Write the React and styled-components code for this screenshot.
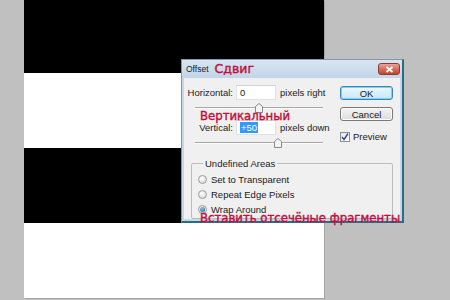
import React from "react";
import styled, { createGlobalStyle } from "styled-components";

const GlobalStyle = createGlobalStyle`
  html, body {
    margin: 0;
    padding: 0;
    background: #c0c0c0;
  }
  body {
    width: 450px;
    height: 300px;
    overflow: hidden;
    font-family: "Liberation Sans", Arial, sans-serif;
  }
`;

// photoshop workspace with the striped document
const Workspace = styled.div`
  position: relative;
  width: 450px;
  height: 300px;
  padding-left: 24px;
  box-sizing: border-box;
`;

const Canvas = styled.div`
  width: 300px;
  height: 298px;
  display: flex;
  flex-direction: column;
  box-shadow: 1px 1px 0 #a4a4a4;
`;

const Stripe = styled.div`
  height: ${(p) => p.$h}px;
  background: ${(p) => (p.$dark ? "#000" : "#fff")};
`;

// the Offset dialog window
const Dialog = styled.div`
  position: absolute;
  left: 181px;
  top: 59px;
  width: 223px;
  height: 164px;
  box-sizing: border-box;
  border: 1px solid #8199ae;
  border-right: 2px solid #2b6b83;
  border-bottom: 2px solid #2b6b83;
  background: #c5d7ea;
  display: flex;
  flex-direction: column;
`;

const TitleBar = styled.div`
  height: 18px;
  display: flex;
  align-items: center;
  padding: 0 2px 0 4px;
  background: linear-gradient(#d9e5f2, #c2d5e9);
`;

const TitleText = styled.span`
  font-size: 8.5px;
  color: #14202e;
`;

const Note = styled.span`
  font-family: "DejaVu Sans", Verdana, sans-serif;
  font-size: ${(p) => p.$size || 11.7}px;
  line-height: 14px;
  color: #c20f3c;
  -webkit-text-stroke: 0.4px #c20f3c;
  white-space: nowrap;
`;

const TitleNote = styled(Note)`
  margin-left: 6px;
`;

const CloseButton = styled.div`
  margin-left: auto;
  width: 22px;
  height: 12px;
  box-sizing: border-box;
  border: 1px solid #8b3b2f;
  border-radius: 3px;
  background: linear-gradient(#eaa597, #d8705c 50%, #c2442f);
  display: flex;
  align-items: center;
  justify-content: center;
`;

const Body = styled.div`
  flex: 1;
  margin: 0 2px 2px 2px;
  background: #f0f0f0;
  display: flex;
  flex-direction: column;
`;

const TopSection = styled.div`
  display: flex;
`;

const Fields = styled.div`
  position: relative;
  width: 150px;
  padding-top: 7px;
  display: flex;
  flex-direction: column;
`;

const FieldRow = styled.div`
  display: flex;
  align-items: center;
  height: 15px;
  font-size: 9.5px;
  color: #1a1a1a;
`;

const FieldLabel = styled.span`
  width: 49px;
  text-align: right;
  margin-right: 3px;
`;

const NumberBox = styled.div`
  width: 40px;
  height: 15px;
  box-sizing: border-box;
  background: #fff;
  border: 1px solid #e2e2e2;
  border-top-color: #d4d4d4;
  padding-left: 3px;
  display: flex;
  align-items: center;
`;

const Selected = styled.span`
  background: #3399ff;
  color: #fff;
  padding: 0 1px;
  line-height: 11px;
`;

const Units = styled.span`
  margin-left: 4px;
`;

const Slider = styled.div`
  position: relative;
  width: 128px;
  height: 10px;
  margin: 3px 0 7px 11px;

  &::before {
    content: "";
    position: absolute;
    left: 0;
    right: 0;
    top: 4px;
    height: 1px;
    background: #a7a7a7;
    box-shadow: 0 1px 0 #fdfdfd;
  }
`;

const Thumb = styled.svg`
  position: absolute;
  top: 0;
  left: ${(p) => p.$pos - 4}px;
`;

const FloatNote = styled(Note)`
  position: absolute;
  left: ${(p) => p.$x}px;
  top: ${(p) => p.$y}px;
`;

const Buttons = styled.div`
  margin-left: 6px;
  width: 53px;
  padding-top: 8px;
  display: flex;
  flex-direction: column;
`;

const Button = styled.div`
  height: 14px;
  box-sizing: border-box;
  border: 1px solid ${(p) => (p.$default ? "#3388c0" : "#7a7a7a")};
  border-radius: 3px;
  background: ${(p) =>
    p.$default
      ? "linear-gradient(#eef8fd, #c6e8fa)"
      : "linear-gradient(#f4f4f4, #dcdcdc)"};
  box-shadow: ${(p) => (p.$default ? "inset 0 0 0 1px #7fd0f2" : "inset 0 0 0 1px #fbfbfb")};
  font-size: 9.5px;
  color: #1a1a1a;
  display: flex;
  align-items: center;
  justify-content: center;
  margin-bottom: 7px;
`;

const CheckRow = styled.label`
  margin-top: 3px;
  display: flex;
  align-items: center;
  font-size: 9.5px;
  color: #1a1a1a;
`;

const CheckBox = styled.span`
  width: 10px;
  height: 10px;
  box-sizing: border-box;
  border: 1px solid #8e8f8f;
  background: linear-gradient(135deg, #e6e6e6, #ffffff);
  margin-right: 3px;
  display: flex;
  align-items: center;
  justify-content: center;
`;

const GroupBox = styled.div`
  position: relative;
  margin: 8px 7px 0 7px;
  height: 56px;
  box-sizing: border-box;
  border: 1px solid #bcbcbc;
  border-radius: 2px;
  padding-top: 8px;
  display: flex;
  flex-direction: column;
`;

const Legend = styled.span`
  position: absolute;
  top: -6px;
  left: 11px;
  padding: 0 2px;
  background: #f0f0f0;
  font-size: 9.5px;
  line-height: 11px;
  color: #1a1a1a;
`;

const RadioRow = styled.div`
  height: 15px;
  display: flex;
  align-items: center;
  padding-left: 6px;
  font-size: 9.5px;
  color: #1a1a1a;
`;

const Radio = styled.span`
  width: 9px;
  height: 9px;
  box-sizing: border-box;
  border-radius: 50%;
  border: 1px solid #9a9a9a;
  background: radial-gradient(circle at 40% 35%, #ffffff, #d2d2d2);
  margin-right: 4px;
  display: flex;
  align-items: center;
  justify-content: center;

  &::after {
    content: "";
    display: ${(p) => (p.$on ? "block" : "none")};
    width: 5px;
    height: 5px;
    border-radius: 50%;
    background: radial-gradient(circle at 40% 35%, #8fc3e6, #1f5d86);
  }
`;

const SliderThumb = ({ pos }) => (
  <Thumb $pos={pos} width="8" height="10" viewBox="0 0 8 10">
    <path
      d="M0.5 9.5 V3.5 L4 0.5 L7.5 3.5 V9.5 Z"
      fill="#f4f4f4"
      stroke="#8a8a8a"
      strokeWidth="1"
    />
  </Thumb>
);

const radios = [
  { label: "Set to Transparent", on: false },
  { label: "Repeat Edge Pixels", on: false },
  { label: "Wrap Around", on: true },
];

const App = () => {
  return (
    <>
      <GlobalStyle />
      <Workspace>
        <Canvas>
          <Stripe $h={73} $dark />
          <Stripe $h={75} />
          <Stripe $h={75} $dark />
          <Stripe $h={75} />
        </Canvas>

        <Dialog>
          <TitleBar>
            <TitleText>Offset</TitleText>
            <TitleNote $size={12.5}>Сдвиг</TitleNote>
            <CloseButton>
              <svg width="9" height="7" viewBox="0 0 9 7">
                <path d="M1.5 1 L7.5 6 M7.5 1 L1.5 6" stroke="#fff" strokeWidth="1.8" />
              </svg>
            </CloseButton>
          </TitleBar>

          <Body>
            <TopSection>
              <Fields>
                <FieldRow>
                  <FieldLabel>Horizontal:</FieldLabel>
                  <NumberBox>0</NumberBox>
                  <Units>pixels right</Units>
                </FieldRow>
                <Slider>
                  <SliderThumb pos={64} />
                </Slider>
                <FieldRow>
                  <FieldLabel>Vertical:</FieldLabel>
                  <NumberBox>
                    <Selected>+50</Selected>
                  </NumberBox>
                  <Units>pixels down</Units>
                </FieldRow>
                <Slider>
                  <SliderThumb pos={83} />
                </Slider>
                <FloatNote $x={16} $y={31}>
                  Вертикальный
                </FloatNote>
              </Fields>

              <Buttons>
                <Button $default>OK</Button>
                <Button>Cancel</Button>
                <CheckRow>
                  <CheckBox>
                    <svg width="8" height="8" viewBox="0 0 8 8">
                      <path d="M1 4 L3 6.5 L7 0.5" fill="none" stroke="#2a4f8f" strokeWidth="1.4" />
                    </svg>
                  </CheckBox>
                  Preview
                </CheckRow>
              </Buttons>
            </TopSection>

            <GroupBox>
              <Legend>Undefined Areas</Legend>
              {radios.map((r) => (
                <RadioRow key={r.label}>
                  <Radio $on={r.on} />
                  {r.label}
                </RadioRow>
              ))}
              <FloatNote $x={8} $y={47}>
                Вставить отсечёные фрагменты
              </FloatNote>
            </GroupBox>
          </Body>
        </Dialog>
      </Workspace>
    </>
  );
};

export default App;
